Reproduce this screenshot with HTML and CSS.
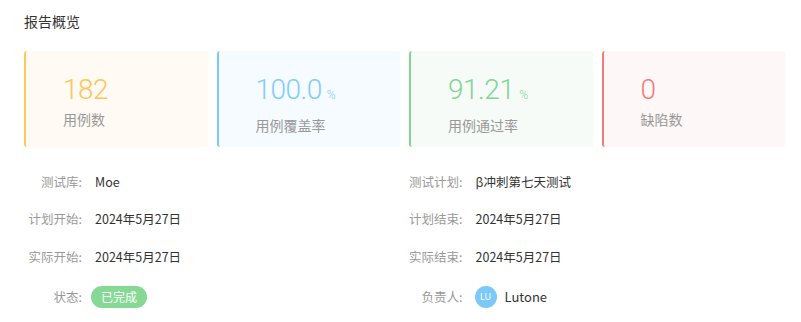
FILE: index.html
```html
<!DOCTYPE html>
<html lang="zh">
<head>
<meta charset="utf-8">
<link rel="stylesheet" href="styles.css">
</head>
<body>
<div class="page">
  <h2 class="title">报告概览</h2>
  <div class="cards">
    <div class="card card-yellow">
      <div class="num">182</div>
      <div class="label">用例数</div>
    </div>
    <div class="card card-blue">
      <div class="num">100.0<span class="pct">%</span></div>
      <div class="label">用例覆盖率</div>
    </div>
    <div class="card card-green">
      <div class="num">91.21<span class="pct">%</span></div>
      <div class="label">用例通过率</div>
    </div>
    <div class="card card-red">
      <div class="num">0</div>
      <div class="label">缺陷数</div>
    </div>
  </div>
  <div class="info">
    <div class="item"><span class="k">测试库:</span><span class="v">Moe</span></div>
    <div class="item"><span class="k">测试计划:</span><span class="v">β冲刺第七天测试</span></div>
    <div class="item"><span class="k">计划开始:</span><span class="v">2024年5月27日</span></div>
    <div class="item"><span class="k">计划结束:</span><span class="v">2024年5月27日</span></div>
    <div class="item"><span class="k">实际开始:</span><span class="v">2024年5月27日</span></div>
    <div class="item"><span class="k">实际结束:</span><span class="v">2024年5月27日</span></div>
    <div class="item item-last"><span class="k">状态:</span><span class="v"><span class="tag">已完成</span></span></div>
    <div class="item item-last"><span class="k">负责人:</span><span class="v user"><span class="avatar">LU</span>Lutone</span></div>
  </div>
</div>
</body>
</html>
```
FILE: styles.css
```css
* { box-sizing: border-box; }
html, body { margin: 0; padding: 0; background: #fff; }
body {
  font-family: "Microsoft YaHei", "Noto Sans CJK SC", "Noto Sans", sans-serif;
  color: #333;
}
.page { padding: 11px 16px 0 24px; }
.title {
  margin: 0;
  font-size: 14px;
  font-weight: 400;
  line-height: 20px;
  color: #333;
}
.cards {
  margin-top: 20px;
  display: grid;
  grid-template-columns: repeat(4, 1fr);
  column-gap: 9px;
}
.card {
  height: 96px;
  border-left: 2px solid;
  border-radius: 3px;
  padding: 24px 0 0 37px;
}
.num {
  font-family: "Roboto", "Lato", sans-serif;
  font-weight: 300;
  font-size: 28px;
  line-height: 29px;
  letter-spacing: -0.5px;
}
.pct {
  font-size: 12px;
  margin-left: 5px;
  letter-spacing: 0;
}
.label {
  margin-top: 5px;
  font-size: 14px;
  line-height: 20px;
  color: #999;
}
.card-yellow { border-color: #fcc95c; background: #fffaf4; }
.card-yellow .num { color: #fcc659; }
.card-blue { border-color: #7cc8f8; background: #f5fbff; }
.card-blue .num { color: #82cbfb; }
.card-green { border-color: #80d596; background: #f6fbf7; }
.card-green .num { color: #80d596; }
.card-red { border-color: #f57b7b; background: #fef7f7; }
.card-red .num { color: #f57b7b; }

.info {
  margin-top: 23px;
  display: grid;
  grid-template-columns: 1fr 1fr;
  row-gap: 15.5px;
}
.item {
  display: flex;
  align-items: center;
  height: 22px;
  font-size: 12.5px;
}
.item-last { margin-top: 3px; }
.k {
  width: 58px;
  text-align: right;
  color: #999;
  flex: none;
}
.v {
  margin-left: 13px;
  color: #333;
}
.tag {
  display: inline-block;
  width: 56px;
  height: 22px;
  line-height: 22px;
  border-radius: 11px;
  background: #86d994;
  color: #fff;
  text-align: center;
  font-size: 12px;
  margin-left: -4px;
}
.user { display: flex; align-items: center; font-size: 13px; margin-left: 12px; }
.avatar {
  width: 22px;
  height: 22px;
  border-radius: 50%;
  background: #7cc8f8;
  color: #fff;
  font-family: "Noto Sans", sans-serif;
  font-size: 9px;
  display: flex;
  align-items: center;
  justify-content: center;
  margin-right: 8px;
}
```
